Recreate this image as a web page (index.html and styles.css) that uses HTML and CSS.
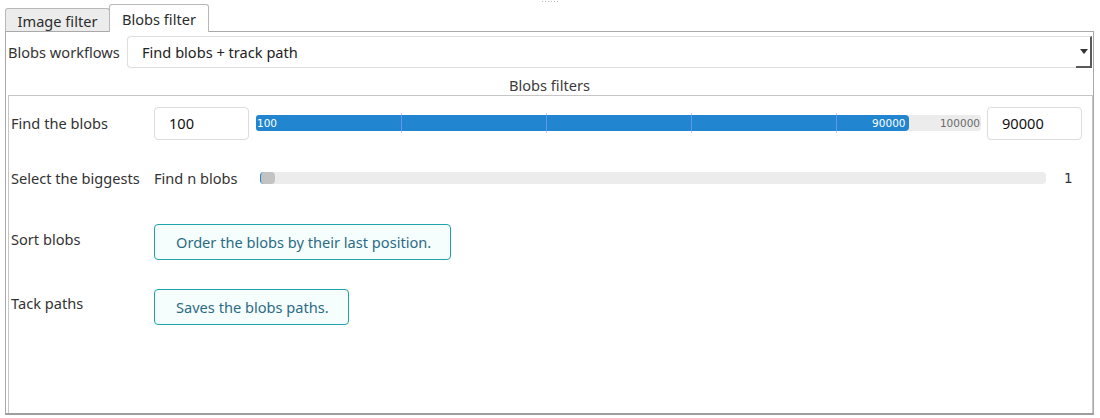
FILE: index.html
```html
<!DOCTYPE html>
<html>
<head>
<meta charset="utf-8">
<link rel="stylesheet" href="styles.css">
</head>
<body>
<div class="grip"><span class="dots"></span></div>
<div class="tabs">
  <div class="tab">Image filter</div>
  <div class="tab active">Blobs filter</div>
</div>
<div class="panel">
  <div class="wf-row">
    <span class="wf-label">Blobs workflows</span>
    <div class="select">
      <span>Find blobs + track path</span>
      <span class="arrow"></span>
    </div>
  </div>
  <div class="frame-title">Blobs filters</div>
  <div class="frame">
    <div class="row row1">
      <div class="label">Find the blobs</div>
      <div class="input">100</div>
      <div class="range">
        <div class="fill" style="width: 90%"></div>
        <span class="tick" style="left: 20%"></span>
        <span class="tick" style="left: 40%"></span>
        <span class="tick" style="left: 60%"></span>
        <span class="tick" style="left: 80%"></span>
        <span class="rl min">100</span>
        <span class="rl val" style="right: 10%">90000</span>
        <span class="rl max">100000</span>
      </div>
      <div class="input">90000</div>
    </div>
    <div class="row row2">
      <div class="label">Select the biggests</div>
      <div class="sub">Find n blobs</div>
      <div class="range2"><span class="knob"></span></div>
      <div class="count">1</div>
    </div>
    <div class="row row3">
      <div class="label">Sort blobs</div>
      <div class="btn btn-order">Order the blobs by their last position.</div>
    </div>
    <div class="row row4">
      <div class="label">Tack paths</div>
      <div class="btn btn-save">Saves the blobs paths.</div>
    </div>
  </div>
</div>
</body>
</html>
```
FILE: styles.css
```css
html, body {
  margin: 0;
  padding: 0;
  background: #ffffff;
}
body {
  font-family: "Noto Sans", "Open Sans", sans-serif;
  font-size: 14.6px;
  color: #333333;
  width: 1100px;
  height: 418px;
  overflow: hidden;
}
.grip {
  height: 4px;
  display: flex;
  justify-content: center;
}
.dots {
  display: block;
  margin-top: 1px;
  width: 16px;
  height: 1px;
  background: repeating-linear-gradient(90deg, #b8b8b8 0 1px, transparent 1px 3px);
}
.tabs {
  display: flex;
  align-items: flex-end;
  padding-left: 5px;
  height: 27px;
  position: relative;
  z-index: 2;
}
.tab {
  box-sizing: border-box;
  width: 105px;
  height: 23px;
  background: #ececec;
  border: 1px solid #b8b8b8;
  border-bottom: none;
  border-radius: 3px 3px 0 0;
  color: #2c2c2c;
  text-align: center;
  line-height: 24px;
}
.tab.active {
  width: 100px;
  height: 28px;
  margin-left: -1px;
  margin-bottom: -1px;
  background: #ffffff;
  line-height: 28px;
  padding-bottom: 4px;
}
.panel {
  box-sizing: border-box;
  margin: 0 6px 0 5px;
  height: 384px;
  border: 1px solid #a9a9a9;
  border-bottom: 2px solid #9e9e9e;
  display: flex;
  flex-direction: column;
}
.wf-row {
  display: flex;
  align-items: center;
  margin-top: 4px;
  padding-left: 2px;
  height: 32px;
}
.wf-label {
  width: 119px;
  color: #333333;
}
.select {
  box-sizing: border-box;
  position: relative;
  flex: 1;
  margin-right: 1px;
  height: 32px;
  border: 1px solid #dedede;
  border-right: 2px solid #5a5a5a;
  border-radius: 4px 0 0 4px;
  display: flex;
  align-items: center;
  justify-content: space-between;
  padding: 0 2px 0 14px;
  color: #222222;
}
.select::after {
  content: "";
  position: absolute;
  right: -2px;
  bottom: -1px;
  width: 16px;
  height: 2px;
  background: #5a5a5a;
}
.arrow {
  width: 0;
  height: 0;
  border-left: 4px solid transparent;
  border-right: 4px solid transparent;
  border-top: 5px solid #333333;
  margin-top: -1px;
}
.frame-title {
  box-sizing: border-box;
  text-align: center;
  height: 27px;
  padding-top: 8px;
  line-height: 18px;
  color: #3a3a3a;
}
.frame {
  box-sizing: border-box;
  flex: 1;
  margin: 0 0 0 2px;
  border: 1px solid #c6c6c6;
  border-bottom: none;
  padding-top: 10px;
}
.row {
  display: flex;
  align-items: center;
}
.label {
  box-sizing: border-box;
  width: 145px;
  padding-left: 2px;
  color: #333333;
  flex: none;
  white-space: nowrap;
}
.input {
  box-sizing: border-box;
  width: 95px;
  height: 33px;
  border: 1px solid #dcdcdc;
  border-radius: 4px;
  padding-left: 14px;
  line-height: 31px;
  color: #111111;
  flex: none;
}
.row1 {
  height: 34px;
}
.range {
  position: relative;
  width: 725px;
  height: 16px;
  margin: 0 6px 0 7px;
  background: #ececec;
  border-radius: 3px;
  font-family: "DejaVu Sans", sans-serif;
  font-size: 10.5px;
}
.fill {
  position: absolute;
  left: 0;
  top: 0;
  bottom: 0;
  background: #2285d0;
  border-radius: 3px 4px 4px 3px;
}
.tick {
  position: absolute;
  top: -2px;
  bottom: -2px;
  width: 1px;
  background: rgba(150, 160, 255, 0.55);
}
.rl {
  position: absolute;
  top: 0;
  line-height: 16px;
}
.rl.min {
  left: 1px;
  color: #ffffff;
}
.rl.val {
  color: #ffffff;
  padding-right: 3px;
}
.rl.max {
  right: 1px;
  color: #6a6a6a;
}
.row2 {
  margin-top: 26px;
  height: 24px;
}
.sub {
  width: 106px;
  flex: none;
  color: #333333;
  white-space: nowrap;
}
.range2 {
  position: relative;
  width: 786px;
  height: 12px;
  background: #ececec;
  border-radius: 4px;
}
.knob {
  position: absolute;
  left: 0;
  top: 0;
  width: 15px;
  height: 12px;
  box-sizing: border-box;
  background: #c3c3c3;
  border-left: 1px solid #2285d0;
  border-radius: 4px;
}
.count {
  margin-left: 18px;
  font-family: "DejaVu Sans", sans-serif;
  font-size: 13.5px;
  color: #333333;
}
.row3, .row4 {
  align-items: flex-start;
}
.row3 {
  margin-top: 34px;
}
.row3 .label {
  padding-top: 5px;
}
.row4 {
  margin-top: 29px;
}
.row4 .label {
  padding-top: 4px;
}
.btn {
  box-sizing: border-box;
  height: 36px;
  border: 1px solid #1fa3aa;
  border-radius: 4px;
  background: #f6fdfd;
  color: #2b6c85;
  line-height: 34px;
  padding: 0 0 0 21px;
  flex: none;
  white-space: nowrap;
}
.btn-order {
  width: 297px;
}
.btn-save {
  width: 195px;
}
```
